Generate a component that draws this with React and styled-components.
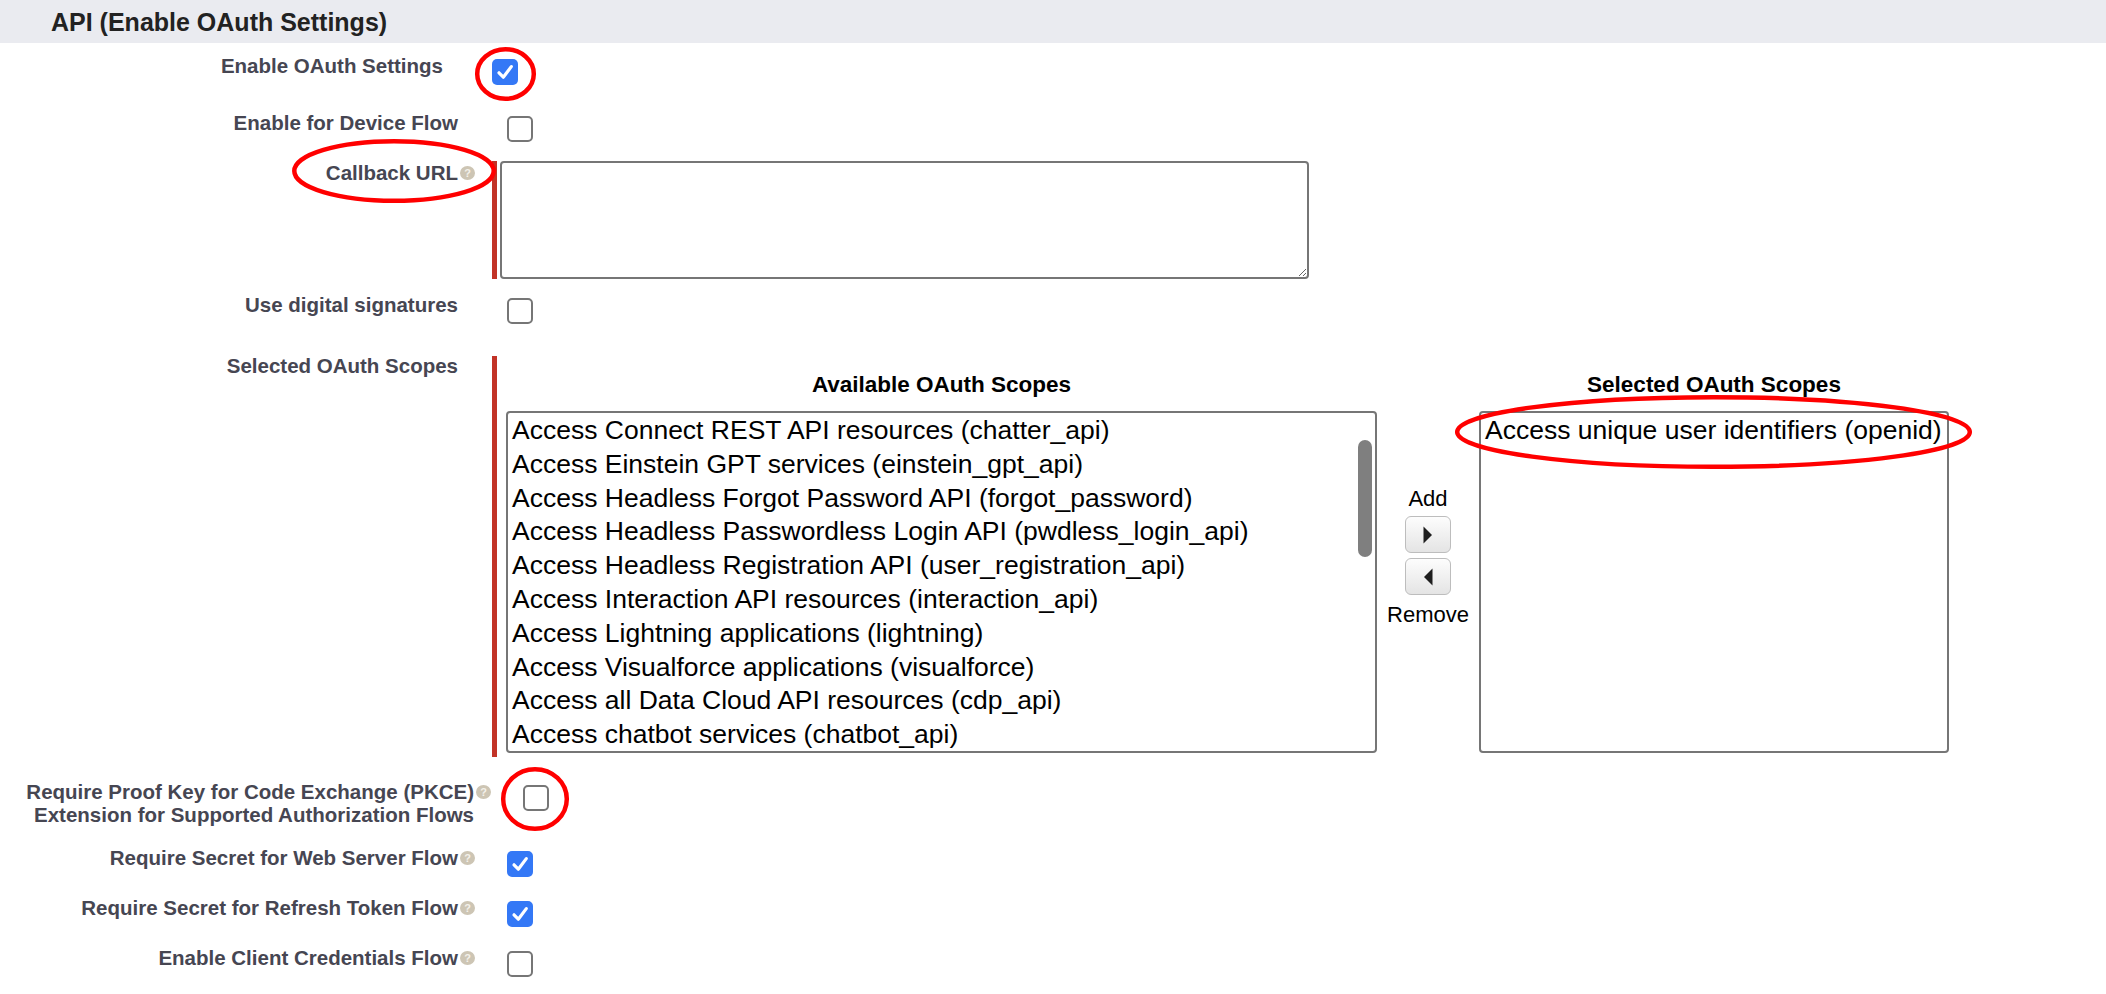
import React from 'react';
import styled, { createGlobalStyle } from 'styled-components';

const GlobalStyle = createGlobalStyle`
  html, body {
    margin: 0;
    padding: 0;
    background: #ffffff;
  }
  body {
    font-family: "Liberation Sans", Arial, Helvetica, sans-serif;
  }
`;

const Page = styled.div`
  position: relative;
  width: 2106px;
  height: 994px;
  overflow: hidden;
  background: #ffffff;
`;

const SectionHeader = styled.h3`
  margin: 0;
  box-sizing: border-box;
  height: 43px;
  padding: 2px 0 0 51px;
  line-height: 41px;
  background: #eaebf0;
  color: #222222;
  font-size: 25px;
  font-weight: bold;
`;

const Form = styled.div`
  display: flex;
  flex-direction: column;
  padding-top: 11px;
`;

const Row = styled.div`
  display: flex;
  align-items: flex-start;
  padding-bottom: ${props => (props.$after !== undefined ? props.$after : 19)}px;
`;

const Label = styled.div`
  flex: none;
  box-sizing: border-box;
  width: ${props => 458 + (props.$shift || 0)}px;
  text-align: right;
  font-size: 20.5px;
  line-height: 23px;
  font-weight: bold;
  color: #464652;
  white-space: nowrap;
`;

const HelpSlot = styled.div`
  flex: none;
  box-sizing: border-box;
  width: 18px;
  height: 23px;
  padding: 5px 0 0 2px;
`;

const HelpIcon = styled.span`
  display: block;
  width: 15px;
  height: 14px;
  border-radius: 50%;
  background: #cdc5b4;
  color: #f4f1ea;
  font-size: 11px;
  font-weight: bold;
  line-height: 14px;
  text-align: center;
`;

const Field = styled.div`
  flex: none;
  display: flex;
  padding-left: 16px;
`;

const Checkbox = styled.span`
  display: flex;
  align-items: center;
  justify-content: center;
  box-sizing: border-box;
  width: 26px;
  height: 26px;
  margin: 5px 0 0 15px;
  border-radius: 5px;
  border: ${props => (props.$checked ? 'none' : '2px solid #767676')};
  background: ${props => (props.$checked ? '#3478f6' : '#ffffff')};
`;

const RequiredBar = styled.span`
  flex: none;
  width: 5px;
  margin-top: ${props => props.$top || 0}px;
  margin-right: ${props => props.$gap}px;
  background: #c23327;
`;

const UrlInput = styled.textarea`
  box-sizing: border-box;
  width: 809px;
  height: 118px;
  margin: 0;
  padding: 2px 4px;
  border: 2px solid #767676;
  border-radius: 4px;
  resize: both;
  font-family: "Liberation Sans", Arial, sans-serif;
  font-size: 20px;
  outline: none;
`;

const Duel = styled.div`
  display: flex;
  padding-bottom: 4px;
`;

const DuelColumn = styled.div`
  display: flex;
  flex-direction: column;
  align-items: center;
  width: ${props => props.$width}px;
  padding-top: 18px;
`;

const DuelHeading = styled.div`
  margin-bottom: 13px;
  font-size: 22.5px;
  line-height: 26px;
  font-weight: bold;
  color: #000000;
  white-space: nowrap;
`;

const ListBox = styled.div`
  position: relative;
  box-sizing: border-box;
  width: 100%;
  height: 342px;
  padding-top: 1px;
  border: 2px solid #767676;
  border-radius: 4px;
  overflow: hidden;
`;

const Option = styled.div`
  padding: 0 4px;
  font-size: 26.5px;
  line-height: 33.8px;
  color: #000000;
  white-space: nowrap;
`;

const ScrollThumb = styled.span`
  position: absolute;
  top: 27px;
  right: 3px;
  width: 14px;
  height: 117px;
  border-radius: 7px;
  background: #7f7f7f;
`;

const MoveColumn = styled.div`
  display: flex;
  flex-direction: column;
  align-items: center;
  width: 102px;
  padding-top: 132px;
`;

const MoveLabel = styled.div`
  margin-top: ${props => props.$top || 0}px;
  font-size: 22px;
  line-height: 25px;
  color: #000000;
`;

const MoveButton = styled.button`
  display: flex;
  align-items: center;
  justify-content: center;
  box-sizing: border-box;
  width: 46px;
  height: 37px;
  margin-top: 5px;
  padding: 0;
  border: 1.5px solid #bdbdbd;
  border-radius: 6px;
  background: linear-gradient(#fdfdfd, #e4e4e4);
`;

const Annotations = styled.svg`
  position: absolute;
  top: 0;
  left: 0;
  pointer-events: none;
`;

const availableScopes = [
  'Access Connect REST API resources (chatter_api)',
  'Access Einstein GPT services (einstein_gpt_api)',
  'Access Headless Forgot Password API (forgot_password)',
  'Access Headless Passwordless Login API (pwdless_login_api)',
  'Access Headless Registration API (user_registration_api)',
  'Access Interaction API resources (interaction_api)',
  'Access Lightning applications (lightning)',
  'Access Visualforce applications (visualforce)',
  'Access all Data Cloud API resources (cdp_api)',
  'Access chatbot services (chatbot_api)',
];

const selectedScopes = ['Access unique user identifiers (openid)'];

const Check = () => (
  <svg width="26" height="26" viewBox="0 0 26 26">
    <path
      d="M7 13.8 L11.3 18.2 L19.3 7.6"
      fill="none"
      stroke="#ffffff"
      strokeWidth="3.2"
      strokeLinecap="round"
      strokeLinejoin="round"
    />
  </svg>
);

const Help = () => <HelpIcon>?</HelpIcon>;

const CheckRow = ({ label, help, checked, shift, after }) => (
  <Row $after={after}>
    <Label $shift={shift}>{label}</Label>
    <HelpSlot>{help && <Help />}</HelpSlot>
    <Field>
      <Checkbox $checked={checked}>{checked && <Check />}</Checkbox>
    </Field>
  </Row>
);

const Arrow = ({ left }) => (
  <svg width="12" height="20" viewBox="0 0 12 20">
    <polygon points={left ? '10.5,1.5 2,10 10.5,18.5' : '1.5,1.5 10,10 1.5,18.5'} fill="#1e1e1e" />
  </svg>
);

const App = () => (
  <Page>
    <GlobalStyle />
    <SectionHeader>API (Enable OAuth Settings)</SectionHeader>
    <Form>
      <CheckRow label="Enable OAuth Settings" checked shift={-15} after={26} />
      <CheckRow label="Enable for Device Flow" />
      <Row $after={14}>
        <Label>Callback URL</Label>
        <HelpSlot>
          <Help />
        </HelpSlot>
        <Field>
          <RequiredBar $gap={3} />
          <UrlInput />
        </Field>
      </Row>
      <CheckRow label="Use digital signatures" after={30} />
      <Row $after={23}>
        <Label>Selected OAuth Scopes</Label>
        <HelpSlot />
        <Field>
          <RequiredBar $gap={9} $top={2} />
          <Duel>
            <DuelColumn $width={871}>
              <DuelHeading>Available OAuth Scopes</DuelHeading>
              <ListBox>
                {availableScopes.map(s => (
                  <Option key={s}>{s}</Option>
                ))}
                <ScrollThumb />
              </ListBox>
            </DuelColumn>
            <MoveColumn>
              <MoveLabel>Add</MoveLabel>
              <MoveButton aria-label="Add">
                <Arrow />
              </MoveButton>
              <MoveButton aria-label="Remove">
                <Arrow left />
              </MoveButton>
              <MoveLabel $top={7}>Remove</MoveLabel>
            </MoveColumn>
            <DuelColumn $width={470}>
              <DuelHeading>Selected OAuth Scopes</DuelHeading>
              <ListBox>
                {selectedScopes.map(s => (
                  <Option key={s}>{s}</Option>
                ))}
              </ListBox>
            </DuelColumn>
          </Duel>
        </Field>
      </Row>
      <CheckRow
        label={
          <>
            Require Proof Key for Code Exchange (PKCE)
            <br />
            Extension for Supported Authorization Flows
          </>
        }
        help
        shift={16}
        after={20}
      />
      <CheckRow label="Require Secret for Web Server Flow" help checked />
      <CheckRow label="Require Secret for Refresh Token Flow" help checked />
      <CheckRow label="Enable Client Credentials Flow" help />
    </Form>
    <Annotations width="2106" height="994" viewBox="0 0 2106 994">
      <g fill="none" stroke="#ff0000" strokeWidth="4.5">
        <ellipse cx="505.5" cy="74" rx="28.3" ry="24.8" />
        <ellipse cx="394" cy="171" rx="99.7" ry="29.8" />
        <ellipse cx="1713.5" cy="432" rx="256.3" ry="34.8" />
        <ellipse cx="535" cy="799" rx="31.8" ry="29.8" />
      </g>
    </Annotations>
  </Page>
);

export default App;
